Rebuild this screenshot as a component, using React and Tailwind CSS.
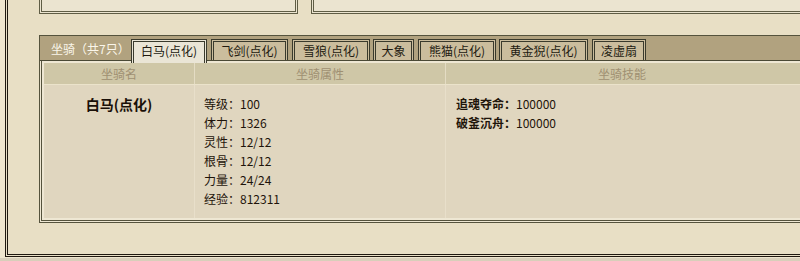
const tabs = [
  { name: "白马(点化)", cls: "w-[76px] ml-0", active: true },
  { name: "飞剑(点化)", cls: "w-[77px] ml-[4px]" },
  { name: "雪狼(点化)", cls: "w-[78px] ml-[4px]" },
  { name: "大象", cls: "w-[41px] ml-[3px]" },
  { name: "熊猫(点化)", cls: "w-[78px] ml-[4px]" },
  { name: "黄金猊(点化)", cls: "w-[89px] ml-[3px]" },
  { name: "凌虚扇", cls: "w-[54px] ml-[4px]" },
];

const attrs = [
  ["等级", "100"],
  ["体力", "1326"],
  ["灵性", "12/12"],
  ["根骨", "12/12"],
  ["力量", "24/24"],
  ["经验", "812311"],
];

const skills = [
  ["追魂夺命", "100000"],
  ["破釜沉舟", "100000"],
];

export default function App() {
  return (
    <div className="w-[800px] h-[261px] overflow-hidden bg-[#d8cfba] font-['Noto_Sans_CJK_SC',sans-serif] text-[12px] text-[#1e140a]">
      <div className="h-[258px] bg-[#eee5cd] pl-[5px]">
        <div className="h-[257px] border-l-[3px] border-b-[3px] border-double border-[#1e170e] bg-[#e8dfc5] overflow-hidden">
          {/* top panels */}
          <div className="flex">
            <div className="shrink-0 ml-[31px] w-[259px] h-[14px] border-x-[3px] border-b-[3px] border-double border-[#5f5d45] bg-[#ebe4d0]" />
            <div className="shrink-0 ml-[13px] w-[600px] h-[14px] border-l-[3px] border-b-[3px] border-double border-[#5f5d45] bg-[#ebe4d0]" />
          </div>
          {/* tab box */}
          <div className="shrink-0 mt-[21px] ml-[31px] w-[800px] h-[188px] border-l border-t border-b border-[#55533d] flex flex-col">
            <div className="flex items-end h-[25px] bg-[#b1a27f] border-b border-[#4a4935]">
              <div className="shrink-0 w-[91px] h-[21px] leading-[20px] pl-[11px] text-[#faf6ea] whitespace-nowrap">
                坐骑（共7只）
              </div>
              {tabs.map((t) =>
                t.active ? (
                  <div
                    key={t.name}
                    className={`${t.cls} relative z-10 -mb-[3px] shrink-0 h-[24px] border-[3px] border-b-0 border-double border-[#3a3a2c] bg-[#eae5d6] text-center leading-[18px] whitespace-nowrap text-[#221a10]`}
                  >
                    {t.name}
                  </div>
                ) : (
                  <div
                    key={t.name}
                    className={`${t.cls} shrink-0 h-[21px] border-[3px] border-b-0 border-double border-[#3a3a2c] bg-[#cbbd9d] text-center leading-[18px] whitespace-nowrap text-[#221a10]`}
                  >
                    {t.name}
                  </div>
                )
              )}
            </div>
            <div className="pl-[1px] pb-[1px] bg-[#eee7d3]">
              <div className="border-l border-b border-[#55533d] pt-[2px] pl-[2px] pb-[2px] bg-[#eee7d3]">
                {/* header */}
                <div className="flex h-[22px] bg-[#cfc7a7] border-b border-[#ebe3cb] text-[#9f9072]">
                  <div className="w-[151px] shrink-0 border-r border-[#e4dcc4] text-center leading-[21px]">坐骑名</div>
                  <div className="w-[251px] shrink-0 border-r border-[#e4dcc4] text-center leading-[21px]">坐骑属性</div>
                  <div className="w-[352px] shrink-0 text-center leading-[21px]">坐骑技能</div>
                </div>
                {/* content */}
                <div className="flex h-[133px] bg-[#e0d6bf]">
                  <div className="w-[151px] shrink-0 border-r border-[#e8dfca] pt-[9px] text-center">
                    <div className="text-[14px] font-bold leading-[20px] text-[#1a1008]">白马(点化)</div>
                  </div>
                  <div className="w-[251px] shrink-0 border-r border-[#e8dfca] pt-[9px] pl-[9px]">
                    {attrs.map(([k, v]) => (
                      <div key={k} className="leading-[19px] whitespace-nowrap">
                        {k}：{v}
                      </div>
                    ))}
                  </div>
                  <div className="w-[352px] shrink-0 pt-[9px] pl-[10px]">
                    {skills.map(([k, v]) => (
                      <div key={k} className="leading-[19px] whitespace-nowrap">
                        <span className="font-bold">{k}：</span>
                        {v}
                      </div>
                    ))}
                  </div>
                </div>
              </div>
            </div>
          </div>
        </div>
      </div>
    </div>
  );
}
